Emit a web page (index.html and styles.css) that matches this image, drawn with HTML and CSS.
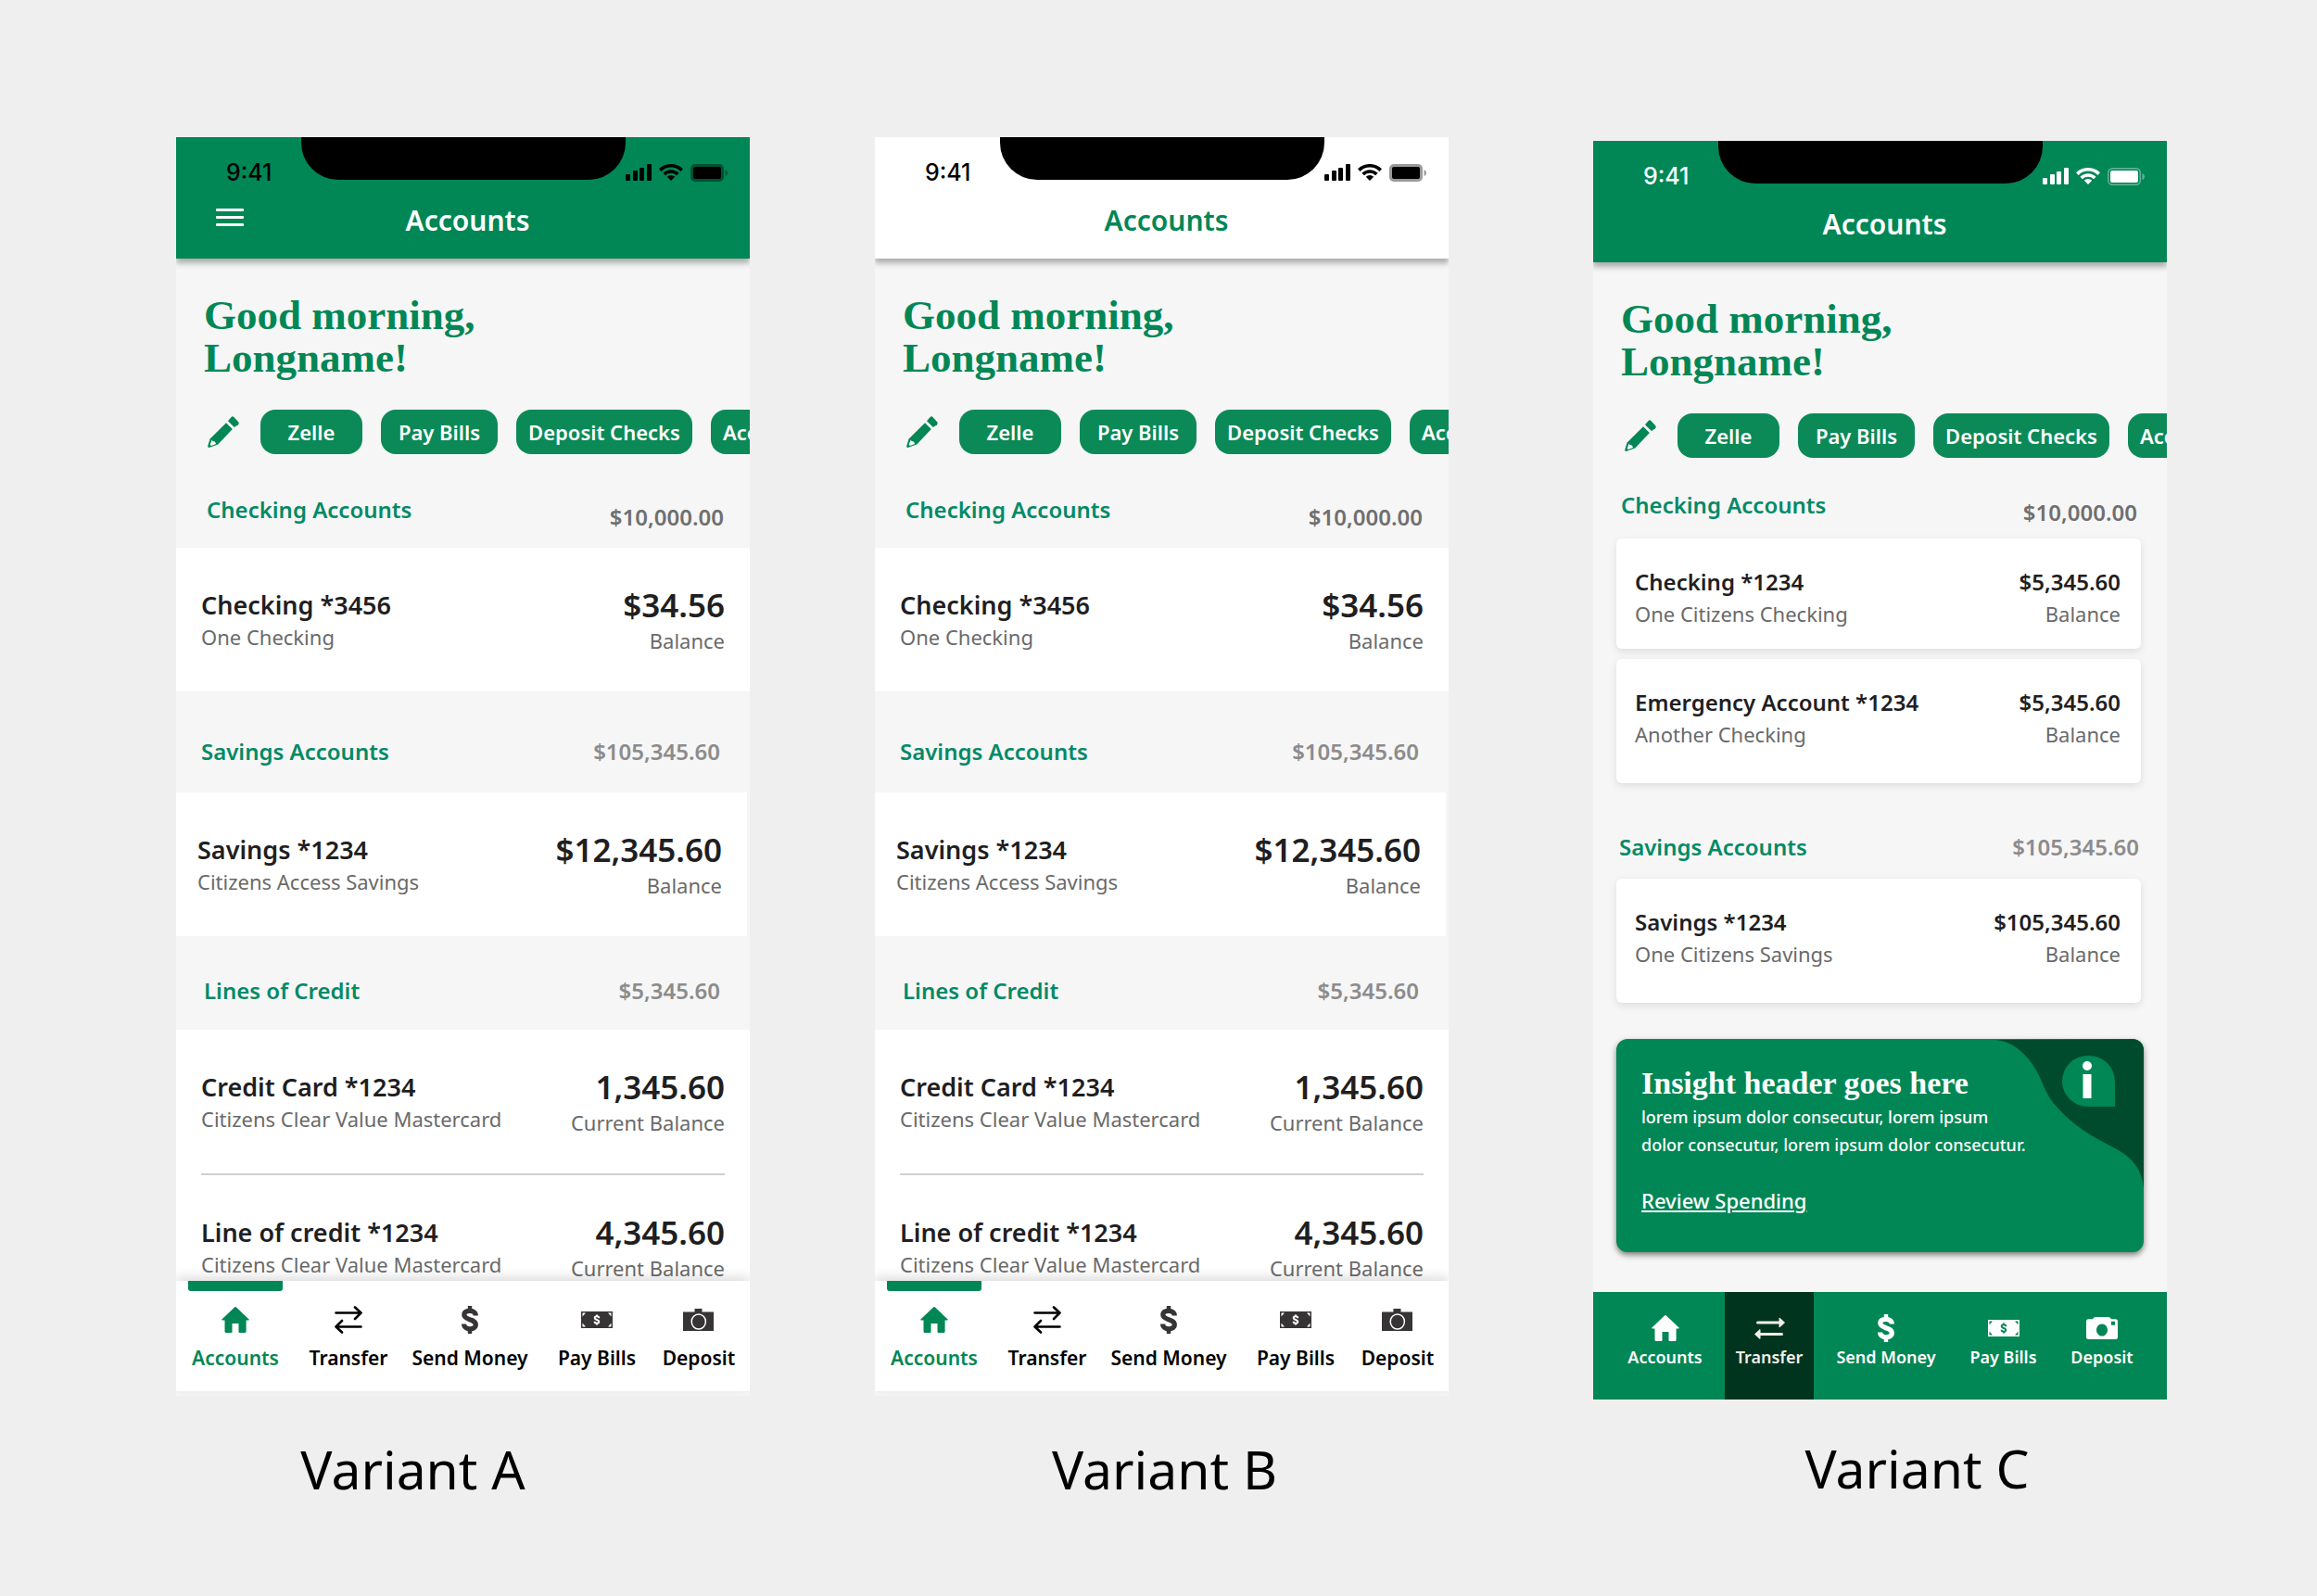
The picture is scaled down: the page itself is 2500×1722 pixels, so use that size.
FILE: index.html
```html
<!DOCTYPE html>
<html lang="en">
<head>
<meta charset="utf-8">
<meta name="viewport" content="width=device-width, initial-scale=1">
<title>Accounts – variants</title>
<link rel="stylesheet" href="styles.css">
</head>
<body>
<svg class="sprite" aria-hidden="true">
  <symbol id="signal" viewBox="0 0 28 18"><rect y="11" width="5" height="7" rx="1"/><rect x="8" y="7" width="5" height="11" rx="1"/><rect x="15" y="4" width="5" height="14" rx="1"/><rect x="23" width="5" height="18" rx="1"/></symbol>
  <symbol id="wifi" viewBox="0 0 26 18"><path fill="none" stroke="currentColor" stroke-width="3.6" d="M1.3 6.6a16.6 16.6 0 0 1 23.4 0M5.7 11a10.4 10.4 0 0 1 14.6 0"/><path d="M13 18l-4.2-4.3a6 6 0 0 1 8.4 0z"/></symbol>
  <symbol id="battery" viewBox="0 0 40 19"><rect class="battery-case" x="0" y="0" width="36" height="19" rx="5"/><rect x="3" y="3" width="30" height="13" rx="2"/><path opacity=".4" d="M37.5 6v7q2.5-1 2.5-3.5T37.5 6z"/></symbol>
  <symbol id="battery-light" viewBox="0 0 40 19"><rect x=".7" y=".7" width="34.6" height="17.6" rx="4.5" fill="none" stroke="currentColor" stroke-opacity=".4" stroke-width="1.4"/><rect x="3" y="3" width="30" height="13" rx="2"/><path opacity=".4" d="M37.5 6v7q2.5-1 2.5-3.5T37.5 6z"/></symbol>
  <symbol id="pencil" viewBox="0 0 34 34"><path d="M20 7.2L26.8 14 11.2 30.4 1.4 34Q-.2 34 .3 32L2.6 24.4z"/><path d="M22 5.2L25.6 1q1.4-1.4 2.8 0L33 6q1.4 1.6 0 3.2L28.8 12z"/><path class="pencil-tip" d="M4.6 25.4l-1.9 5.4 1.2 1.2 5.2-2-1.2-2.6-2.4-.4z"/></symbol>
  <symbol id="home" viewBox="0 0 30 28"><path d="M14 .5q1-.9 2 0L29.6 13.4q.7 1.1-.6 1.1h-2.4V26.500q0 1.500-1.500 1.500H19.500q-1 0-1-1V18h-7v9q0 1-1 1H5q-1.500 0-1.500-1.500V14.500H1q-1.300 0-.6-1.100z"/></symbol>
  <symbol id="transfer" viewBox="0 0 30 30"><path fill="none" stroke="currentColor" stroke-width="2.600" stroke-linecap="round" stroke-linejoin="round" d="M1.500 7.500H28M22 1.500l6.500 6-6.500 6.500M28.500 22.500H2M8 16l-6.500 6.500 6.500 6"/></symbol>
  <symbol id="transfer-solid" viewBox="0 0 33 24"><path fill="none" stroke="currentColor" stroke-width="3" stroke-linecap="round" d="M3.500 6H27M6 18.500H29.500"/><path stroke="currentColor" stroke-linejoin="round" d="M27 1l5.500 5-5.500 5zM6 13.500l-5.500 5 5.500 5z"/></symbol>
  <symbol id="dollar" viewBox="0 0 18 30"><path fill="none" stroke="currentColor" stroke-width="5.200" d="M15.300 10.500C15.300 3.700 2.800 3.700 2.800 9.600 2.800 15.800 15.300 13.600 15.300 20.300 15.300 26.500 2.600 26.500 2.600 19.500"/><path d="M6.800 0h4.400v5H6.800zM6.800 25h4.400v5H6.800z"/></symbol>
  <symbol id="bill" viewBox="0 0 34 18"><path d="M0 0h34v18H0z"/><path class="bill-mark" d="M1.500 1.500H5L1.500 5.500zM32.500 1.500H29l3.500 4zM1.500 16.500H5l-3.500-4zM32.500 16.500H29l3.500-4z"/><path class="bill-line" d="M19.300 7.200c0-2.600-4.600-2.600-4.600-.2 0 2.400 4.600 1.500 4.600 4 0 2.500-4.700 2.400-4.700-.2M17 3.500v2M17 12.500v2"/></symbol>
  <symbol id="camera" viewBox="0 0 34 24"><path d="M0 3.500h12.500V0h8v3.500H33V24H0z"/><ellipse cx="16.800" cy="14" rx="7.600" ry="8" fill="none" stroke="#fff" stroke-width="1.500"/></symbol>
  <symbol id="camera-solid" viewBox="0 0 34 24"><path fill-rule="evenodd" d="M7.500 1.500Q8 0 10 0H24q2 0 2.500 1.500L27 2.200H31.500Q34 2.200 34 4.500V21.500Q34 24 31.500 24H2.500Q0 24 0 21.500V4.500Q0 2.200 2.500 2.200H7zM17 7.500a6 6.500 0 1 0 .01 0zM27 4.800v4h4v-4z"/></symbol>
</svg>

<main class="board">
  <figure class="variant variant-a">
    <section class="phone">
      <header class="top-bar">
        <div class="status">
          <span class="time">9:41</span>
          <span class="status-icons"><svg class="i-signal"><use href="#signal"/></svg><svg class="i-wifi"><use href="#wifi"/></svg><svg class="i-battery"><use href="#battery"/></svg></span>
          <span class="notch"></span>
        </div>
        <div class="title-row">
          <button class="menu" type="button" aria-label="Menu"><span></span><span></span><span></span></button>
          <h1>Accounts</h1>
        </div>
      </header>
      <h2 class="greeting">Good morning,<br>Longname!</h2>
      <div class="chips">
        <button class="edit" type="button" aria-label="Edit shortcuts"><svg><use href="#pencil"/></svg></button>
        <button class="chip chip-s" type="button">Zelle</button>
        <button class="chip chip-m" type="button">Pay Bills</button>
        <button class="chip chip-l" type="button">Deposit Checks</button>
        <button class="chip chip-l chip-cut" type="button">Accounts</button>
      </div>
      <div class="group-head head-checking"><h3>Checking Accounts</h3><span class="total total-dark">$10,000.00</span></div>
      <article class="row"><div class="name"><h4>Checking *3456</h4><p>One Checking</p></div><div class="value"><strong>$34.56</strong><p>Balance</p></div></article>
      <div class="group-head head-savings"><h3>Savings Accounts</h3><span class="total">$105,345.60</span></div>
      <article class="row row-savings"><div class="name"><h4>Savings *1234</h4><p>Citizens Access Savings</p></div><div class="value"><strong>$12,345.60</strong><p>Balance</p></div></article>
      <div class="group-head head-credit"><h3>Lines of Credit</h3><span class="total">$5,345.60</span></div>
      <article class="row"><div class="name"><h4>Credit Card *1234</h4><p>Citizens Clear Value Mastercard</p></div><div class="value"><strong>1,345.60</strong><p>Current Balance</p></div></article>
      <hr class="rule">
      <article class="row"><div class="name"><h4>Line of credit *1234</h4><p>Citizens Clear Value Mastercard</p></div><div class="value"><strong>4,345.60</strong><p>Current Balance</p></div></article>
      <nav class="tabs" aria-label="Main">
        <a class="tab tab-current" href="#"><svg class="i-home"><use href="#home"/></svg><span>Accounts</span></a>
        <a class="tab tab-black" href="#"><svg class="i-transfer"><use href="#transfer"/></svg><span>Transfer</span></a>
        <a class="tab" href="#"><svg class="i-dollar"><use href="#dollar"/></svg><span>Send Money</span></a>
        <a class="tab" href="#"><svg class="i-bill"><use href="#bill"/></svg><span>Pay Bills</span></a>
        <a class="tab" href="#"><svg class="i-camera"><use href="#camera"/></svg><span>Deposit</span></a>
      </nav>
    </section>
    <figcaption>Variant A</figcaption>
  </figure>

  <figure class="variant variant-b">
    <section class="phone">
      <header class="top-bar">
        <div class="status">
          <span class="time">9:41</span>
          <span class="status-icons"><svg class="i-signal"><use href="#signal"/></svg><svg class="i-wifi"><use href="#wifi"/></svg><svg class="i-battery"><use href="#battery"/></svg></span>
          <span class="notch"></span>
        </div>
        <div class="title-row">
          <h1>Accounts</h1>
        </div>
      </header>
      <h2 class="greeting">Good morning,<br>Longname!</h2>
      <div class="chips">
        <button class="edit" type="button" aria-label="Edit shortcuts"><svg><use href="#pencil"/></svg></button>
        <button class="chip chip-s" type="button">Zelle</button>
        <button class="chip chip-m" type="button">Pay Bills</button>
        <button class="chip chip-l" type="button">Deposit Checks</button>
        <button class="chip chip-l chip-cut" type="button">Accounts</button>
      </div>
      <div class="group-head head-checking"><h3>Checking Accounts</h3><span class="total total-dark">$10,000.00</span></div>
      <article class="row"><div class="name"><h4>Checking *3456</h4><p>One Checking</p></div><div class="value"><strong>$34.56</strong><p>Balance</p></div></article>
      <div class="group-head head-savings"><h3>Savings Accounts</h3><span class="total">$105,345.60</span></div>
      <article class="row row-savings"><div class="name"><h4>Savings *1234</h4><p>Citizens Access Savings</p></div><div class="value"><strong>$12,345.60</strong><p>Balance</p></div></article>
      <div class="group-head head-credit"><h3>Lines of Credit</h3><span class="total">$5,345.60</span></div>
      <article class="row"><div class="name"><h4>Credit Card *1234</h4><p>Citizens Clear Value Mastercard</p></div><div class="value"><strong>1,345.60</strong><p>Current Balance</p></div></article>
      <hr class="rule">
      <article class="row"><div class="name"><h4>Line of credit *1234</h4><p>Citizens Clear Value Mastercard</p></div><div class="value"><strong>4,345.60</strong><p>Current Balance</p></div></article>
      <nav class="tabs" aria-label="Main">
        <a class="tab tab-current" href="#"><svg class="i-home"><use href="#home"/></svg><span>Accounts</span></a>
        <a class="tab tab-black" href="#"><svg class="i-transfer"><use href="#transfer"/></svg><span>Transfer</span></a>
        <a class="tab" href="#"><svg class="i-dollar"><use href="#dollar"/></svg><span>Send Money</span></a>
        <a class="tab" href="#"><svg class="i-bill"><use href="#bill"/></svg><span>Pay Bills</span></a>
        <a class="tab" href="#"><svg class="i-camera"><use href="#camera"/></svg><span>Deposit</span></a>
      </nav>
    </section>
    <figcaption>Variant B</figcaption>
  </figure>

  <figure class="variant variant-c">
    <section class="phone">
      <header class="top-bar">
        <div class="status">
          <span class="time">9:41</span>
          <span class="status-icons"><svg class="i-signal"><use href="#signal"/></svg><svg class="i-wifi"><use href="#wifi"/></svg><svg class="i-battery"><use href="#battery-light"/></svg></span>
          <span class="notch"></span>
        </div>
        <div class="title-row">
          <h1>Accounts</h1>
        </div>
      </header>
      <h2 class="greeting">Good morning,<br>Longname!</h2>
      <div class="chips">
        <button class="edit" type="button" aria-label="Edit shortcuts"><svg><use href="#pencil"/></svg></button>
        <button class="chip chip-s" type="button">Zelle</button>
        <button class="chip chip-m" type="button">Pay Bills</button>
        <button class="chip chip-l" type="button">Deposit Checks</button>
        <button class="chip chip-l chip-cut" type="button">Accounts</button>
      </div>
      <div class="group-head head-checking"><h3>Checking Accounts</h3><span class="total total-dark">$10,000.00</span></div>
      <div class="cards">
        <article class="card card-short"><div class="name"><h4>Checking *1234</h4><p>One Citizens Checking</p></div><div class="value"><strong>$5,345.60</strong><p>Balance</p></div></article>
        <article class="card"><div class="name"><h4>Emergency Account *1234</h4><p>Another Checking</p></div><div class="value"><strong>$5,345.60</strong><p>Balance</p></div></article>
      </div>
      <div class="group-head head-savings"><h3>Savings Accounts</h3><span class="total">$105,345.60</span></div>
      <div class="cards">
        <article class="card"><div class="name"><h4>Savings *1234</h4><p>One Citizens Savings</p></div><div class="value"><strong>$105,345.60</strong><p>Balance</p></div></article>
      </div>
      <aside class="insight">
        <svg class="insight-art" viewBox="0 0 160 162" aria-hidden="true">
          <path fill="#004b2d" d="M0 1C23 3 40 22 50 46C58 65 62 70 80 87C98 103 115 110 131 119C151 130 158 143 160 161V0z"/>
          <path fill="#008755" d="M100 18a28 28 0 0 1 29 28v27h-29a28 27.500 0 0 1 0-55z"/>
          <circle fill="#fff" cx="99" cy="29" r="5"/><path fill="#fff" d="M94.500 38h9v26h-9z"/>
        </svg>
        <h3>Insight header goes here</h3>
        <p>lorem ipsum dolor consecutur, lorem ipsum<br>dolor consecutur, lorem ipsum dolor consecutur.</p>
        <a href="#">Review Spending</a>
      </aside>
      <nav class="tabs" aria-label="Main">
        <a class="tab" href="#"><svg class="i-home"><use href="#home"/></svg><span>Accounts</span></a>
        <a class="tab tab-current" href="#"><svg class="i-transfer"><use href="#transfer-solid"/></svg><span>Transfer</span></a>
        <a class="tab" href="#"><svg class="i-dollar"><use href="#dollar"/></svg><span>Send Money</span></a>
        <a class="tab" href="#"><svg class="i-bill"><use href="#bill"/></svg><span>Pay Bills</span></a>
        <a class="tab" href="#"><svg class="i-camera"><use href="#camera-solid"/></svg><span>Deposit</span></a>
      </nav>
    </section>
    <figcaption>Variant C</figcaption>
  </figure>
</main>
</body>
</html>
```
FILE: styles.css
```css
:root {
  --green: #008755;
  --chip: #0b8a58;
  --teal: #008a66;
  --ink: #211e1f;
  --muted: #6a6a6a;
  --page: #efefef;
  --panel: #f6f6f6;
}

* { box-sizing: border-box; }

body {
  margin: 0;
  background: var(--page);
  color: #000;
  font-family: "Noto Sans", sans-serif;
}

h1, h2, h3, h4, p, figure { margin: 0; }
h1, h3, h4, strong { font-weight: 600; }
a { color: inherit; text-decoration: none; }
button { padding: 0; border: 0; background: none; color: inherit; font: inherit; }
svg { display: block; fill: currentColor; }
.sprite { position: absolute; width: 0; height: 0; }

.board {
  display: flex;
  align-items: flex-start;
  gap: 135px;
  padding: 148px 162px 100px 190px;
}

.variant { flex: 1 1 0; min-width: 0; }

.phone {
  position: relative;
  overflow: hidden;
  padding-bottom: 5px;
  background: var(--panel);
}

figcaption {
  padding: 43px 108px 0 0;
  font-size: 57px;
  line-height: 72px;
  text-align: center;
}

/* Top bar */
.top-bar {
  position: relative;
  height: 131px;
  background: var(--green);
  box-shadow: 0 5px 6px rgba(0, 0, 0, .3);
}

.status {
  display: flex;
  justify-content: space-between;
  align-items: center;
  padding: 28px 24px 0 54px;
}

.time { font: 500 25px/20px Inter, sans-serif; }
.status-icons { display: flex; align-items: center; gap: 8px; }
.i-signal { width: 28px; height: 18px; }
.i-wifi { width: 26px; height: 18px; }
.i-battery { width: 40px; height: 19px; }
.battery-case { opacity: .4; }

.notch {
  position: absolute;
  top: 0;
  left: 50%;
  width: 350px;
  height: 46px;
  margin-left: -175px;
  border-radius: 0 0 40px 40px;
  background: #000;
}

.title-row {
  display: grid;
  grid-template-columns: 30px 1fr 30px;
  align-items: center;
  padding: 22px 33px 0 43px;
  color: #fff;
}

h1 {
  grid-column: 2;
  grid-row: 1;
  font-size: 30px;
  line-height: 40px;
  text-align: center;
}

.menu { display: grid; gap: 5px; padding-bottom: 8px; }
.menu span { height: 3px; border-radius: 1px; background: #fff; }

.greeting {
  padding: 38px 30px 0;
  color: var(--green);
  font: 700 45px/46px "Liberation Serif", serif;
}

/* Shortcut chips */
.chips {
  display: flex;
  align-items: center;
  gap: 20px;
  margin-top: 33px;
  padding-left: 34px;
}

.edit { flex: none; width: 37px; color: var(--green); }
.edit svg { width: 34px; height: 34px; }
.pencil-tip { fill: var(--panel); }

.chip {
  flex: none;
  height: 48px;
  border-radius: 16px;
  background: var(--chip);
  color: #fff;
  font-size: 22px;
  font-weight: 600;
  line-height: 48px;
}

.chip-s { width: 110px; }
.chip-m { width: 126px; }
.chip-l { width: 190px; }
.chip-cut { padding-left: 13px; text-align: left; }

/* Group headings */
.group-head {
  display: flex;
  justify-content: space-between;
  align-items: flex-start;
  font-size: 24px;
  line-height: 32px;
}

.group-head h3 { color: var(--teal); font-size: 24px; }
.total { color: #8c8c8c; font-weight: 600; }
.total-dark { margin-top: 8px; color: #6f6f6f; }
.head-checking { height: 101px; padding: 44px 28px 0 33px; }
.head-savings { height: 109px; padding: 49px 32px 0 27px; }
.head-credit { height: 101px; padding: 43px 32px 0 30px; }

/* Account rows */
.row {
  display: flex;
  justify-content: space-between;
  min-height: 155px;
  padding: 39px 27px 0;
  background: #fff;
}

.row-savings { margin-right: 3px; padding-left: 23px; }
.row .name { padding-top: 4px; }
.value { text-align: right; }
.value strong { display: block; }
.name p, .value p { color: var(--muted); font-size: 22px; line-height: 30px; }
.row h4 { color: var(--ink); font-size: 27px; line-height: 38px; }
.row strong { color: var(--ink); font-size: 35px; line-height: 46px; }

.rule {
  height: 2px;
  margin: 0;
  border: solid #fff;
  border-width: 0 27px;
  background: #d0d0d0;
}

/* Tab bar */
.tabs {
  position: relative;
  display: grid;
  grid-template-columns: 128fr 116fr 146fr 128fr 92fr;
  height: 119px;
  margin-top: -41px;
  padding-right: 9px;
  background: #fff;
  box-shadow: 0 -4px 12px rgba(0, 0, 0, .14);
}

.tab {
  position: relative;
  display: grid;
  grid-template-rows: 30px 28px;
  align-content: start;
  place-items: center;
  row-gap: 12px;
  padding-top: 27px;
  color: #363435;
  font-size: 21px;
  font-weight: 600;
  line-height: 28px;
  white-space: nowrap;
}

.tab span { color: #000; }
.tab-black { color: #000; }
.tab-current, .tab-current span { color: var(--green); }

.tab-current::before {
  content: "";
  position: absolute;
  top: 0;
  left: 13px;
  right: 13px;
  height: 11px;
  border-radius: 0 0 3px 3px;
  background: var(--green);
}

.i-home { width: 30px; height: 28px; }
.i-transfer { width: 30px; height: 30px; }
.i-dollar { width: 18px; height: 30px; }
.i-bill { width: 34px; height: 18px; }
.i-camera { width: 34px; height: 24px; }
.bill-mark { fill: var(--mark, #fff); }
.bill-line { fill: none; stroke: var(--mark, #fff); stroke-width: 2; }

/* Variant B */
.variant-b .top-bar { background: #fff; }
.variant-b h1 { color: var(--green); }
.variant-b figcaption { padding: 43px 0 0 6px; }

/* Variant C */
.variant-c { margin: 4px 0 0 21px; }
.variant-c .phone { padding-bottom: 0; }
.variant-c .status { color: #fff; }
.variant-c figcaption { padding: 38px 0 0 80px; }
.variant-c .head-checking { height: 87px; padding: 35px 32px 0 30px; }
.variant-c .head-savings { height: 103px; padding: 53px 30px 0 28px; }

.cards { display: grid; gap: 11px; padding: 0 28px 0 25px; }

.card {
  display: flex;
  justify-content: space-between;
  min-height: 134px;
  padding: 28px 22px 0 20px;
  border-radius: 6px;
  background: #fff;
  box-shadow: 0 3px 8px rgba(0, 0, 0, .1);
}

.card-short { min-height: 119px; }

.card h4, .card strong {
  color: var(--ink);
  font-size: 24px;
  line-height: 38px;
}

.insight {
  position: relative;
  margin: 39px 25px 0;
  padding: 27px 27px 41px;
  border-radius: 12px;
  background: var(--green);
  box-shadow: 0 3px 6px rgba(0, 0, 0, .5);
  color: #fff;
  font-size: 18px;
  font-weight: 500;
  line-height: 30px;
}

.insight-art {
  position: absolute;
  top: 0;
  right: 0;
  width: 160px;
  height: 162px;
  border-top-right-radius: 12px;
}

.insight h3 { font: 700 34px/42px "Liberation Serif", serif; }

.insight a {
  display: block;
  width: fit-content;
  margin-top: 30px;
  font-size: 22px;
  text-decoration: underline;
}

.variant-c .tabs {
  --mark: var(--green);
  grid-template-columns: 129fr 96fr 156fr 97fr 116fr;
  height: 116px;
  margin-top: 43px;
  padding: 0 12px 0 13px;
  background: var(--green);
  box-shadow: none;
}

.variant-c .tab {
  row-gap: 2px;
  padding-top: 24px;
  color: #fff;
  font-size: 18px;
}

.variant-c .tab span { color: inherit; }
.variant-c .tab-current { background: #00341f; color: #f3efe6; }
.variant-c .tab-current::before { content: none; }
.variant-c .i-transfer { width: 33px; height: 24px; }
```
